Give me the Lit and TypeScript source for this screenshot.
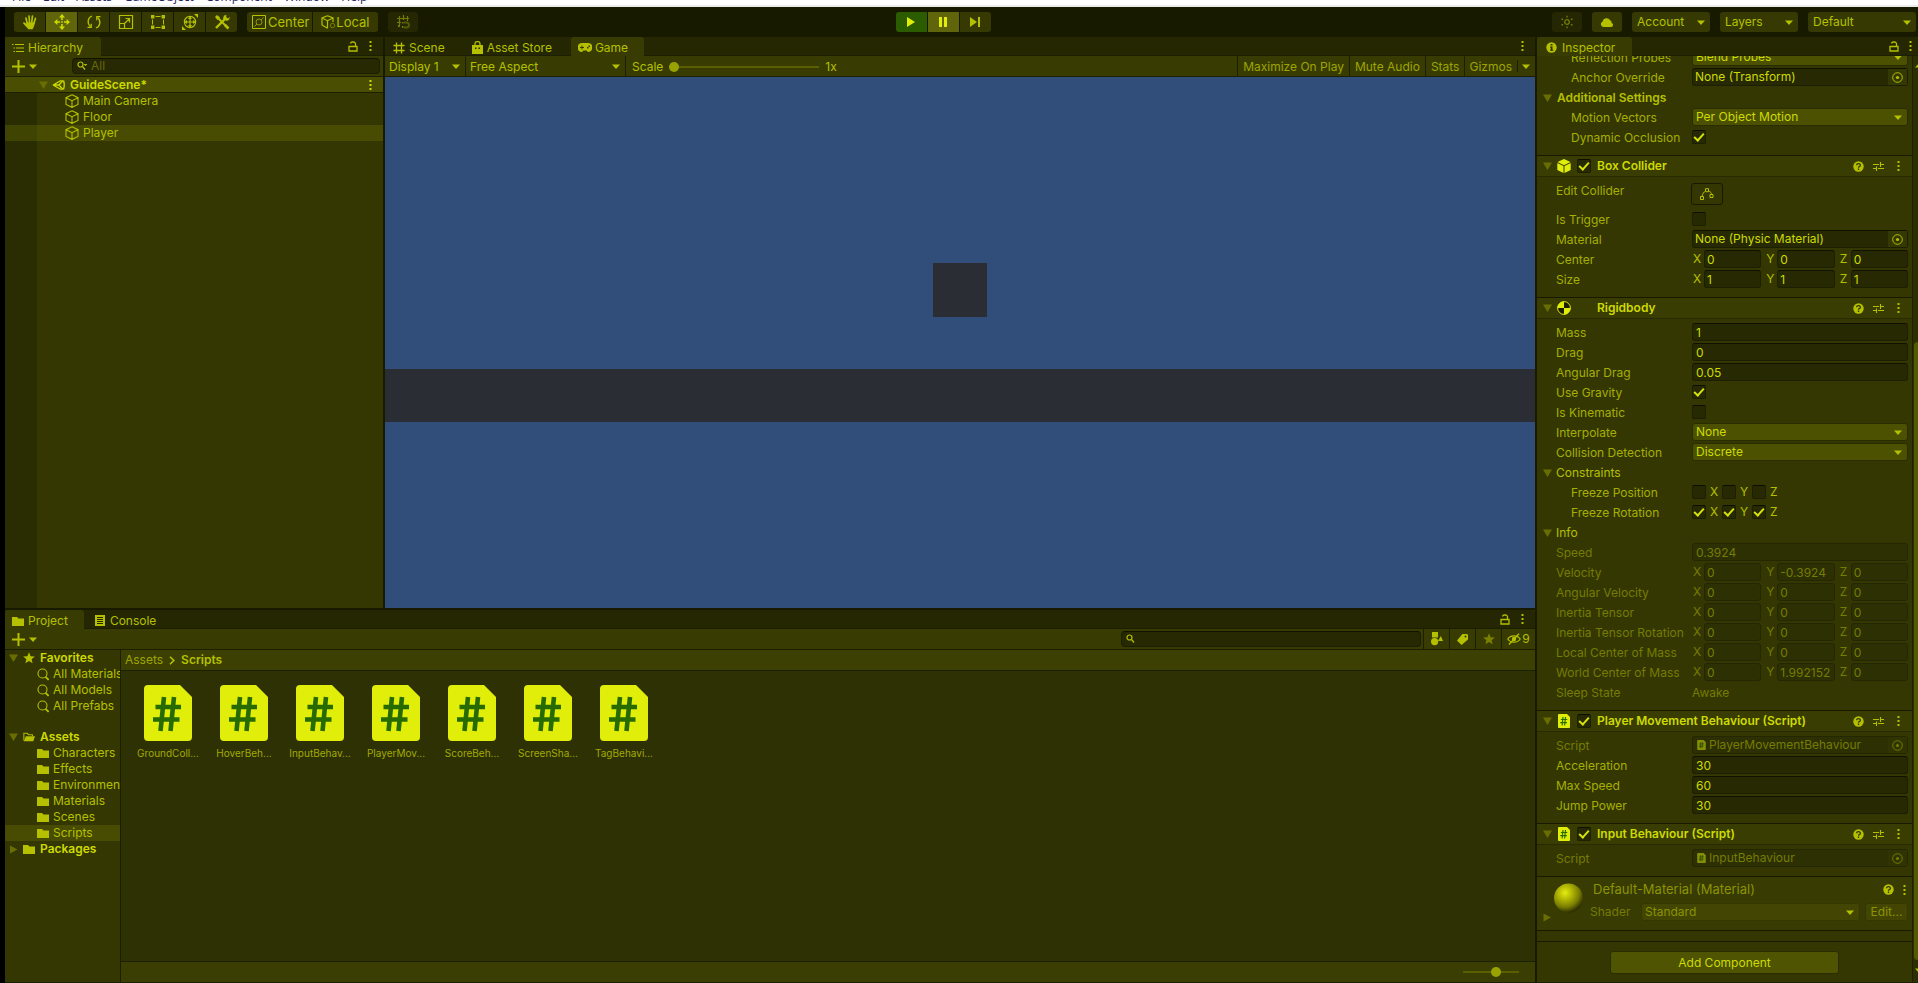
import { LitElement, html, svg, css, nothing, TemplateResult } from "lit";
import { customElement } from "lit/decorators.js";
import { classMap } from "lit/directives/class-map.js";

/* ---------- icons ---------- */

const icon = (w: number, h: number, body: unknown, cls = "") =>
  html`<svg class="ico ${cls}" width=${w} height=${h} viewBox="0 0 ${w} ${h}" fill="currentColor" aria-hidden="true">${body}</svg>`;

const line = (d: string, width = 1) =>
  svg`<path d=${d} fill="none" stroke="currentColor" stroke-width=${width}></path>`;

const icons = {
  hand: () => icon(16, 16, svg`
    <path d="M5.2 9.2 4 4.2M7.5 8 7 2M9.8 8 10.4 2.2M11.8 9.4 13.4 4.4" fill="none" stroke="currentColor" stroke-width="1.7" stroke-linecap="round"></path>
    <path d="M4.4 8.2h8.4c0 2.4-.9 4.8-2.2 7H6.400L1.200 9.400c-.5-.9.6-1.7 1.500-1l1.900 1.500z"></path>`),
  move: () => icon(16, 16, svg`
    <path d="M8 0 11 3.4H5zM8 16l3-3.400H5zM0 8l3.400-3v6zM16 8l-3.400-3v6z"></path>
    ${line("M8 3v3M8 10v3M3 8h3M10 8h3", 1.6)}
    <path d="M7 7h2v2H7z" opacity=".6"></path>`),
  rotate: () => icon(16, 16, svg`
    ${line("M6 2C1.600 3.600.8 9 4.400 12.600M10 14c4.400-1.600 5.200-7 1.600-10.600", 1.3)}
    ${line("M1.500 13.400h3.700V9.800M14.500 2.600h-3.700v3.600", 1.3)}`),
  scale: () => icon(16, 16, svg`
    ${line("M1.500 1.500h13v13h-13zM1.500 9.500h5v5M6.500 9.500 11.500 4.500M7.500 4.500h4v4", 1.2)}`),
  rect: () => icon(16, 16, svg`
    <path d="M1 1h3.400v3.400H1zM11.600 1H15v3.400h-3.400zM1 11.600h3.400V15H1zM11.600 11.600H15V15h-3.400z"></path>
    ${line("M5.500 2.500h5M5.500 13.500h5M2.500 5.500v5M13.500 5.500v5")}`),
  transform: () => icon(18, 16, svg`
    <circle cx="9" cy="8" r="5.600" fill="none" stroke="currentColor" stroke-width="1.200"></circle>
    ${line("M9 3v10M4 8h10", 1.2)}
    <path d="M9 2.500 11 5H7zM9 13.500l2-2.500H7zM3.500 8 6 6v4zM14.500 8 12 6v4z"></path>
    <path d="M13 0h4v4zM1 12v4h4z"></path>`),
  tools: () => icon(16, 16, svg`
    ${line("M3.500 3.500 14 14", 2)}${line("M12.500 3.500 2 14", 2.4)}
    <path d="M1 3 3 1l3 2.500L3.500 6zM10 1.600l2.600-.6-.6 2.600 2.200.8 1.300-1.600c.5 3-1.400 4.400-3.500 3.900L9 4.500zM10 12l2-2 3.400 3.400-1.800 2z"></path>`),
  center: () => icon(14, 14, svg`
    ${line("M.5.5h13v13H.5z")}
    <g opacity=".7">${line("M5 9l-2.500 2.500M9 5l2.500-2.500")}<circle cx="7" cy="7" r="3" fill="none" stroke="currentColor"></circle></g>`),
  local: () => icon(15, 14, svg`
    ${line("M6.500.7 12 3v4M6.500.7 1 3v7l5.500 3.200M1 3l5.500 2.700L12 3M6.500 5.700v7.500", 1.2)}
    <circle cx="11.500" cy="10.500" r="2.200" fill="none" stroke="currentColor" opacity=".5"></circle>`),
  snap: () => icon(16, 16, svg`
    ${line("M4.500 2v10M8.500 1v5M12.500 2v5M2 4.500h12M2 8.500h4", 1.2)}
    <g opacity=".6">${line("M9 8.500h2.500a2.500 2.500 0 0 1 0 5H9", 2)}</g><path d="M7 8h1.500v1.500H7zM7 12h1.500v2H7zM3 11h2v2H3z"></path>`),
  play: () => icon(12, 12, svg`<path d="M2 1 10 6 2 11z"></path>`),
  pause: () => icon(12, 12, svg`<path d="M2 1h3v10H2zM7 1h3v10H7z"></path>`),
  step: () => icon(12, 12, svg`<path d="M1 1 8 6 1 11zM9 1h2v10H9z"></path>`),
  collab: () => icon(14, 14, svg`
    <circle cx="7" cy="7" r="2.300" fill="none" stroke="currentColor" stroke-width="1.300"></circle>
    <path d="M6.300.8h1.400v1.800H6.300zM6.300 11.400h1.400v1.800H6.300zM1.500 3.500h1.600v1.500H1.500zM10.900 3.500h1.600v1.500h-1.600zM1.500 9h1.600v1.500H1.500zM10.900 9h1.600v1.500h-1.600z"></path>`),
  cloud: () => icon(14, 10, svg`<path d="M3 10a3 3 0 0 1-.4-5.600A4 4 0 0 1 9.900 3a3 3 0 0 1 1.800 3A2.100 2.100 0 0 1 11.500 10z"></path>`),
  down: (cls = "") => icon(8, 5, svg`<path d="M0 .5h8L4 5z"></path>`, cls),
  up: () => icon(8, 5, svg`<path d="M0 4.500h8L4 0z"></path>`),
  fold: () => icon(9, 8, svg`<path d="M0 .5h9L4.500 8z"></path>`, "fold"),
  foldRight: () => icon(8, 9, svg`<path d="M.5.5v8L8 4.500z"></path>`, "fold"),
  lock: () => icon(10, 11, svg`${line("M1 5.500h8v4.500H1zM7.500 5.500V3a2 2 0 0 0-2-2h-1a2 2 0 0 0-2 1.500", 1.3)}`),
  dots: () => icon(3, 12, svg`<path d="M.5 1h2v2h-2zM.5 5h2v2h-2zM.5 9h2v2h-2z"></path>`, "dots"),
  list: () => icon(12, 12, svg`${line("M3 2.500h9M4 6h8M4 9.500h8", 1.2)}<path d="M0 2h1.500v1H0zM1.500 5.500H3v1H1.500zM1.500 9H3v1H1.500z"></path>`),
  plus: () => icon(13, 13, svg`<path d="M5.500 0h2v5.500H13v2H7.500V13h-2V7.500H0v-2h5.500z"></path>`),
  lens: (drop = false) => icon(12, 10, svg`
    <circle cx="3.500" cy="3.500" r="2.500" fill="none" stroke="currentColor" stroke-width="1.200"></circle>${line("M5.400 5.400 8 8.500", 1.4)}
    ${drop ? svg`<path d="M6.500 3h4l-2 2z"></path>` : nothing}`),
  find: () => icon(12, 13, svg`<circle cx="5.500" cy="5.500" r="4.500" fill="none" stroke="currentColor" stroke-width="1.100"></circle>${line("M8.600 8.800 11.600 12", 1.8)}`),
  grid: () => icon(12, 12, svg`${line("M3.500.5v11M8.500.5v11M.5 3.500h11M.5 8.500h11", 1.3)}`),
  bag: () => icon(11, 13, svg`<path d="M0 4h11v9H0z"></path>${line("M3 4V2.500a2 2 0 0 1 2-1.800h1a2 2 0 0 1 2 1.800V4", 1.3)}<path d="M3 6.500h1.500V8H3zM6.500 6.500H8V8H6.500z" fill="#242702"></path>`),
  gamepad: () => icon(14, 9, svg`<path d="M4 0h6a4.500 4.500 0 0 1 0 9L8.500 7.500h-3L4 9a4.500 4.500 0 0 1 0-9z"></path><path d="M3.500 2.500h1V4H6v1H4.500v1.500h-1V5H2V4h1.500zM9 4h1.500v1.500H9zM10.500 2.500H12V4h-1.500z" fill="#393c02"></path>`),
  unity: () => icon(13, 12, svg`
    ${line("M1 6 9.500 1.200M1 6l8.500 4.800M1.500 6H7M7 6l4-4.500M7 6l4 4.500", 1.3)}
    ${line("M11.500 1.500c1 3 1 6 0 9", 1.3)}`),
  cube: () => icon(14, 14, svg`${line("M7 .8 13 3.700v6.800L7 13.300 1 10.500V3.700zM1 3.700l6 3 6-3M7 6.700v6.600", 1.1)}`),
  info: () => icon(11, 11, svg`<circle cx="5.500" cy="5.500" r="5.200"></circle><path d="M4.700 2h1.800v1.600H4.700zM4 4.500h2.500v3.300h.8v1H4v-1h.8V5.500H4z" fill="#2c2f02"></path>`),
  folder: () => icon(12, 10, svg`<path d="M0 1h5l1.500 1.500H12V10H0z"></path>`),
  folderOpen: () => icon(14, 10, svg`${line("M1 9V.7h4l1.300 1.600H11V4", 1.2)}<path d="M3.300 4H14l-2 6H1z"></path>`),
  page: () => icon(10, 11, svg`<path d="M0 0h10v11H0z"></path><path d="M2 2h6v1H2zM2 4h6v1H2zM2 6h6v1H2zM2 8h6v1H2z" fill="#242702"></path>`),
  star: () => icon(12, 12, svg`<path d="M6 .3 7.600 4.200l4.200.3-3.200 2.700 1 4.100L6 9.100l-3.600 2.200 1-4.100L.2 4.500l4.200-.3z"></path>`),
  shapes: () => icon(12, 14, svg`<path d="M1 0h6v5.500H1zM7 9 9.800 4 12 9z"></path><circle cx="3.600" cy="9.600" r="3.600"></circle>`),
  tag: () => icon(11, 11, svg`<path d="M5.500 0H10l1 1v4.500L4.500 11 0 6.500z"></path><circle cx="8.500" cy="2.500" r="1" fill="#343702"></circle>`),
  eye: () => icon(14, 12, svg`${line("M.8 6C3.500 1.800 10.500 1.800 13.200 6 10.500 10.200 3.500 10.200.8 6z", 1.2)}<circle cx="7" cy="6" r="2.200"></circle>${line("M12 .8 2 11.500", 1.3)}`),
  chevron: () => icon(6, 9, svg`${line("M1 .8 4.800 4.500 1 8.200", 1.6)}`),
  picker: () => icon(11, 11, svg`<circle cx="5.500" cy="5.500" r="4.800" fill="none" stroke="currentColor"></circle><circle cx="5.500" cy="5.500" r="1.600"></circle>`),
  help: () => icon(11, 11, svg`<circle cx="5.500" cy="5.500" r="5.200"></circle><path d="M3.600 4.300a1.900 1.600 0 1 1 2.600 1.400q-.7.300-.7 1M5.500 7.600v1.300" fill="none" stroke="#343702" stroke-width="1.300"></path>`),
  presets: () => icon(11, 11, svg`${line("M0 3.500h6M8 3.500h3M0 7.500h3M5 7.500h6M7.500 1v5M3.500 5.500v4.500", 1.1)}`),
  vertices: () => icon(14, 12, svg`${line("M.5 8.500h3v3h-3zM5.500.7h3v3h-3zM10 6.500h3v3h-3zM2 8.500C2.500 5.500 4 4 5.500 3M8.500 3C10.500 3.500 11.500 5 11.500 6.500")}`),
  boxCollider: () => icon(14, 14, svg`<path d="M7 0 13.500 3 7 6.200.5 3zM.3 4l6.200 3v7L.3 11zM13.700 4l-6.200 3v7l6.200-3z"></path>`),
  rigidbody: () => icon(14, 14, svg`<circle cx="7" cy="7" r="6.400" fill="#1d1d00" stroke="currentColor"></circle><path d="M7 7V.6A6.400 6.400 0 0 0 .6 7zM7 7v6.400A6.400 6.400 0 0 0 13.400 7z"></path>`),
  script: (w = 12, h = 14) => html`<svg class="ico script" width=${w} height=${h} viewBox="0 0 48 56" aria-hidden="true">
    <path d="M4 0h32l12 12v40a4 4 0 0 1-4 4H4a4 4 0 0 1-4-4V4a4 4 0 0 1 4-4z" fill="#e0ee0a"></path>
    <path d="M20 12 16.500 46M30 12 26.500 46M11.500 22H37M9 34.500H35.500" fill="none" stroke="#266a00" stroke-width="4.600"></path></svg>`,
};

/* ---------- shared styling ---------- */

const shared = css`
  :host {
    --bar: #242702;
    --panel: #343702;
    --tool: #393c02;
    --line: #1c1f00;
    --text: #b4c000;
    --hot: #cddb00;
    --label: #a5af02;
    --dim: #757c02;
    --field: #262902;
    color: var(--text);
    font: 12px/16px Inter, "Liberation Sans", sans-serif;
  }
  * { box-sizing: border-box; }
  button, input, select { font: inherit; color: inherit; margin: 0; padding: 0; border: 0; background: none; border-radius: 0; outline: none; }
  button { display: flex; align-items: center; justify-content: center; white-space: nowrap; }
  select { appearance: none; width: 100%; height: 100%; }
  .ico { display: block; flex: none; }
  .fold { color: #696e02; }
  .tabs { display: flex; height: 19px; background: var(--bar); border-bottom: 1px solid var(--line); border-radius: 3px 3px 0 0; }
  .tab { gap: 4px; height: 19px; padding: 2px 18px 0 7px; justify-content: flex-start; }
  .tab.on { background: var(--tool); border-radius: 3px 3px 0 0; }
  .tabs .end { margin-left: auto; display: flex; align-items: center; gap: 11px; padding-right: 11px; }
  .strip { display: flex; align-items: center; height: 21px; background: var(--tool); border-bottom: 1px solid var(--line); }
  .add { gap: 4px; padding: 0 7px; height: 20px; }
  .search { display: flex; align-items: center; gap: 2px; height: 16px; padding-left: 4px; background: var(--field); border: 1px solid var(--line); border-top-color: #111100; border-radius: 4px; }
  .search input { flex: 1; min-width: 0; height: 14px; }
  .search input::placeholder { color: #66680a; opacity: 1; }
  .pick { display: grid; align-items: center; }
  .pick > * { grid-area: 1 / 1; }
  .pick .ico { justify-self: end; pointer-events: none; }
  input[type="range"] { appearance: none; height: 12px; background: linear-gradient(#5a6002, #5a6002) center / 100% 2px no-repeat; }
  input[type="range"]::-webkit-slider-thumb { appearance: none; width: 10px; height: 10px; border-radius: 5px; background: #98a202; }
`;

/* ---------- hierarchy ---------- */

@customElement("hierarchy-panel")
export class HierarchyPanel extends LitElement {
  static styles = [shared, css`
    :host { display: flex; flex-direction: column; min-width: 0; background: var(--panel); }
    .search { flex: 1; margin: 0 3px 0 28px; }
    .scene { display: flex; align-items: center; height: 16px; padding: 0 11px 0 34px; background: #4a4e02; border-bottom: 1px solid var(--line); color: var(--hot); font-weight: 600; }
    .scene .ico:nth-child(2) { margin: 0 5px 0 4px; }
    .scene span { flex: 1; }
    .tree { flex: 1; margin: 0; padding: 0; list-style: none; background: linear-gradient(90deg, #2a2d02 32px, transparent 32px); }
    li { display: flex; align-items: center; gap: 4px; height: 16px; padding-left: 60px; }
    li.sel { background: linear-gradient(90deg, #404402 32px, #484c02 32px); }
  `];
  render() {
    return html`
      <div class="tabs">
        <button class="tab on">${icons.list()}Hierarchy</button>
        <div class="end">${icons.lock()}${icons.dots()}</div>
      </div>
      <div class="strip">
        <button class="add" aria-label="Create">${icons.plus()}${icons.down()}</button>
        <div class="search">${icons.lens(true)}<input placeholder="All" aria-label="Search hierarchy"></div>
      </div>
      <div class="scene">${icons.fold()}${icons.unity()}<span>GuideScene*</span>${icons.dots()}</div>
      <ul class="tree">
        ${["Main Camera", "Floor", "Player"].map(n => html`
          <li class=${classMap({ sel: n === "Player" })}>${icons.cube()}${n}</li>`)}
      </ul>`;
  }
}

/* ---------- game view ---------- */

@customElement("game-panel")
export class GamePanel extends LitElement {
  static styles = [shared, css`
    :host { display: flex; flex-direction: column; min-width: 0; background: var(--panel); }
    .tab { padding-right: 16px; gap: 3px; }
    .tab.wide { padding-right: 19px; padding-left: 8px; gap: 4px; }
    .sep { padding: 0 5px 0 4px; height: 20px; border-right: 1px solid var(--line); }
    .sep select { padding-top: 1px; }
    .display { width: 81px; }
    .aspect { width: 160px; }
    .scale { display: flex; align-items: center; gap: 6px; flex: 1; padding: 1px 0 0 6px; }
    .scale input { width: 150px; }
    .opt { height: 20px; padding: 1px 5px 0 5px; border-left: 1px solid var(--line); color: #9ca502; }
    .giz { padding-left: 4px; }
    .more { height: 12px; padding: 0 5px 0 4px; border-left: 1px solid var(--line); }
    .view { flex: 1; min-height: 0; width: 100%; display: block; background: #304e79; }
  `];
  render() {
    return html`
      <div class="tabs">
        <button class="tab wide">${icons.grid()}Scene</button>
        <button class="tab wide">${icons.bag()}Asset Store</button>
        <button class="tab on">${icons.gamepad()}Game</button>
        <div class="end">${icons.dots()}</div>
      </div>
      <div class="strip">
        <div class="pick sep display"><select aria-label="Display"><option>Display 1</option></select>${icons.down()}</div>
        <div class="pick sep aspect"><select aria-label="Aspect"><option>Free Aspect</option></select>${icons.down()}</div>
        <div class="scale"><label for="scale">Scale</label><input id="scale" type="range" min="1" max="5" value="1">1x</div>
        <button class="opt">Maximize On Play</button>
        <button class="opt">Mute Audio</button>
        <button class="opt">Stats</button>
        <button class="opt giz">Gizmos</button>
        <button class="more" aria-label="Gizmo options">${icons.down()}</button>
      </div>
      <svg class="view" viewBox="0 0 1150 531" preserveAspectRatio="none" role="img" aria-label="Game view">
        <rect x="548" y="186" width="54" height="54" fill="#2a2d34"></rect>
        <rect x="0" y="292" width="1150" height="53" fill="#2a2d34"></rect>
      </svg>`;
  }
}

/* ---------- project browser ---------- */

@customElement("project-panel")
export class ProjectPanel extends LitElement {
  static styles = [shared, css`
    :host { display: flex; flex-direction: column; min-width: 0; background: var(--panel); border-bottom: 1px solid var(--line); }
    .tab { padding-right: 16px; }
    .tabs .tab:nth-child(2) { padding-left: 11px; gap: 5px; }
    .strip .search { width: 300px; margin: 0 2px 0 auto; }
    .cell { width: 26px; height: 20px; border-left: 1px solid var(--line); }
    .cell.wide { width: 34px; gap: 1px; }
    .cell.off { color: #7a8002; }
    .body { flex: 1; display: flex; min-height: 0; }
    .tree { width: 116px; overflow: hidden; border-right: 1px solid var(--line); }
    ul { margin: 0 0 15px; padding: 0; list-style: none; }
    .tree ul:nth-child(2) { margin-bottom: 0; }
    li { display: flex; align-items: center; gap: 4px; height: 16px; padding-left: 32px; white-space: nowrap; }
    li.root { padding-left: 4px; gap: 5px; font-weight: 600; color: var(--hot); }
    li.root .ico:nth-child(2) { width: 12px; }
    li .ico { color: var(--text); }
    li .fold { width: 9px; color: #696e02; }
    li.sel { background: #484c02; }
    .files { flex: 1; display: flex; flex-direction: column; min-width: 0; background: #2e3104; }
    nav { display: flex; align-items: center; gap: 6px; height: 21px; padding-left: 4px; background: #3c4002; border-bottom: 1px solid var(--line); }
    nav a { color: #9ca502; text-decoration: none; }
    nav b { font-weight: 600; }
    .grid { flex: 1; display: flex; flex-wrap: wrap; align-content: flex-start; padding: 14px 9px; }
    figure { display: flex; flex-direction: column; align-items: center; width: 76px; margin: 0; }
    figcaption { margin-top: 4px; font-size: 10px; color: #a2ab02; }
    footer { display: flex; align-items: center; justify-content: flex-end; height: 21px; padding-right: 16px; background: #3a3e02; border-top: 1px solid var(--line); }
    footer input { width: 56px; }
  `];
  render() {
    const root = (mark: TemplateResult, pic: TemplateResult, name: string) => html`<li class="root">${mark}${pic}${name}</li>`;
    const files = ["GroundColl...", "HoverBeh...", "InputBehav...", "PlayerMov...", "ScoreBeh...", "ScreenSha...", "TagBehavi..."];
    return html`
      <div class="tabs">
        <button class="tab on">${icons.folder()}Project</button>
        <button class="tab">${icons.page()}Console</button>
        <div class="end">${icons.lock()}${icons.dots()}</div>
      </div>
      <div class="strip">
        <button class="add" aria-label="Create">${icons.plus()}${icons.down()}</button>
        <div class="search">${icons.lens()}<input aria-label="Search project"></div>
        <button class="cell" aria-label="Search by type">${icons.shapes()}</button>
        <button class="cell" aria-label="Search by label">${icons.tag()}</button>
        <button class="cell off" aria-label="Save search">${icons.star()}</button>
        <button class="cell wide" aria-label="Hidden packages">${icons.eye()}9</button>
      </div>
      <div class="body">
        <div class="tree">
          <ul>
            ${root(icons.fold(), icons.star(), "Favorites")}
            ${["All Materials", "All Models", "All Prefabs"].map(n => html`<li>${icons.find()}${n}</li>`)}
          </ul>
          <ul>
            ${root(icons.fold(), icons.folderOpen(), "Assets")}
            ${["Characters", "Effects", "Environment", "Materials", "Scenes", "Scripts"].map(n => html`
              <li class=${classMap({ sel: n === "Scripts" })}>${icons.folder()}${n}</li>`)}
            ${root(icons.foldRight(), icons.folder(), "Packages")}
          </ul>
        </div>
        <div class="files">
          <nav><a href="#">Assets</a>${icons.chevron()}<b>Scripts</b></nav>
          <div class="grid">
            ${files.map(n => html`<figure>${icons.script(48, 56)}<figcaption>${n}</figcaption></figure>`)}
          </div>
          <footer><input type="range" aria-label="Icon size" value="60"></footer>
        </div>
      </div>`;
  }
}

/* ---------- inspector ---------- */

@customElement("inspector-panel")
export class InspectorPanel extends LitElement {
  static styles = [shared, css`
    :host { display: flex; flex-direction: column; min-width: 0; background: var(--panel); border-bottom: 1px solid var(--line); }
    .tab { padding: 2px 17px 0 9px; gap: 5px; }
    .tabs .end { padding-right: 6px; gap: 10px; }
    .body { flex: 1; display: flex; min-height: 0; }
    .scroll { flex: 1; min-width: 0; overflow: hidden; }
    .bar { width: 6px; display: flex; flex-direction: column; background: #2c2f02; border-left: 1px solid var(--line); color: var(--text); padding: 7px 0 9px 2px; overflow: hidden; }
    .bar i { flex: 1; margin: 274px 0 8px -1px; background: #545a02; border-radius: 4px 0 0 4px; }
    section { display: flex; flex-direction: column; gap: 2px; padding: 0 4px 9px 19px; border-top: 1px solid #191900; }
    section.first { margin-top: -8px; border-top: 0; }
    header { display: flex; align-items: center; height: 21px; margin: 0 -4px 2px -19px; padding: 0 12px 0 6px; background: #3a3d02; border-bottom: 1px solid #282b02; color: var(--hot); font-weight: 600; }
    header .mark { width: 14px; margin: 0 6px 0 5px; display: flex; justify-content: center; color: #e0ee0a; }
    header .box { width: 14px; margin-right: 6px; }
    header b { flex: 1; font-weight: 600; white-space: nowrap; }
    .tail { display: flex; align-items: center; gap: 9px; color: var(--text); }
    header .tail .dots { margin-left: 4px; }
    .row { display: grid; grid-template-columns: 136px minmax(0, 1fr); align-items: center; height: 18px; }
    .row > label, .row > .name { padding-top: 2px; line-height: 16px; white-space: nowrap; color: var(--label); }
    .row.in > :first-child { padding-left: 15px; }
    .row.off, .row.off > label, .row.off > .name { color: var(--dim); }
    .group { display: flex; align-items: center; gap: 4px; height: 18px; margin-left: -13px; padding-top: 2px; }
    .group.strong { font-weight: 600; gap: 5px; }
    .field, .obj { width: 100%; height: 18px; padding: 0 3px; background: var(--field); border: 1px solid var(--line); border-top-color: #111100; border-radius: 3px; color: var(--hot); }
    .obj { justify-content: flex-start; padding: 0 0 0 2px; }
    .obj span { flex: 1; text-align: left; }
    .obj em { display: flex; align-items: center; align-self: stretch; padding: 0 4px; background: #343802; color: var(--text); }
    .off .field, .off .obj { background: #2d3002; border-color: #242702; color: var(--dim); }
    .off .obj em { background: #303302; color: var(--dim); }
    .obj .script { width: 9px; height: 10px; margin: 0 3px 0 2px; opacity: .5; }
    .pick { height: 18px; background: #4c5102; border: 1px solid #2a2d02; border-radius: 3px; color: var(--hot); }
    .pick select { padding-left: 3px; }
    .pick .ico { margin-right: 5px; color: var(--text); }
    .vec { display: grid; grid-template-columns: repeat(3, minmax(0, 1fr)); gap: 4px; }
    .vec label { display: flex; align-items: center; gap: 3px; }
    .vec label span { width: 9px; padding-left: 1px; }
    .vec .field { flex: 1; min-width: 0; padding: 0 2px; }
    .trio { display: flex; }
    .trio label { display: flex; align-items: center; gap: 4px; width: 30px; }
    input[type="checkbox"] { appearance: none; display: grid; place-items: center; width: 14px; height: 14px; background: var(--field); border: 1px solid var(--line); border-top-color: #0e0e00; border-radius: 2px; }
    input[type="checkbox"]:checked::after { content: ""; width: 8px; height: 4px; margin-top: -3px; border: solid #d6e40a; border-width: 0 0 2px 2px; transform: rotate(-48deg); }
    .row.tall { align-items: start; height: 27px; padding-top: 1px; }
    .row.tall > label { padding-top: 1px; }
    .edit { width: 32px; height: 22px; margin: 1px 0 0 -1px; border: 1px solid #191900; border-radius: 3px; }
    .mat { display: grid; grid-template: 15px 18px / 38px 47px minmax(0, 1fr) 43px; row-gap: 6px; height: 55px; padding: 5px 4px 8px 15px; align-items: center; background: #383b02; border: solid #191900; border-width: 1px 0; }
    .mat .ball { grid-area: 1 / 1 / 3 / 2; align-self: start; }
    .mat .fold { grid-area: 2 / 1; align-self: end; margin: 0 0 -1px -9px; }
    .mat h2 { grid-area: 1 / 2 / 2 / 4; margin: 0; padding-left: 3px; font: 13px/15px Inter, "Liberation Sans", sans-serif; color: #8b9302; white-space: nowrap; }
    .mat .tail { grid-area: 1 / 4; justify-content: flex-end; padding-right: 2px; }
    .mat label { grid-area: 2 / 2; color: var(--dim); }
    .mat .pick { grid-area: 2 / 3; margin: 0 5px 0 4px; }
    .mat .more { grid-area: 2 / 4; }
    .mat .pick, .mat .more { height: 18px; background: #424602; border: 1px solid #343702; border-radius: 3px; color: #8b9302; }
    .mat select { opacity: 1; color: inherit; }
    .gap { height: 11px; border-bottom: 1px solid #191900; }
    .append { width: 229px; height: 23px; margin: 9px auto 0; background: #4e5402; border: 1px solid #2a2d02; border-radius: 3px; color: var(--hot); }
  `];

  private slug(name: string) {
    return name.toLowerCase().replace(/[^a-z]+/g, "-");
  }
  private row(name: string, control: TemplateResult, cls = "") {
    return html`<div class="row ${cls}"><label for=${this.slug(name)}>${name}</label>${control}</div>`;
  }
  private text(name: string, value: string, off = false) {
    return this.row(name, html`<input class="field" id=${this.slug(name)} .value=${value} ?disabled=${off}>`, off ? "off" : "");
  }
  private tick(name: string, on: boolean, cls = "") {
    return this.row(name, html`<input type="checkbox" id=${this.slug(name)} .checked=${on}>`, cls);
  }
  private choice(name: string, value: string, cls = "") {
    return this.row(name, html`<div class="pick"><select id=${this.slug(name)}><option>${value}</option></select>${icons.down()}</div>`, cls);
  }
  private object(name: string, value: string, cls = "", off = false) {
    return this.row(name, html`<button class="obj" id=${this.slug(name)} ?disabled=${off}>${off ? icons.script() : nothing}<span>${value}</span><em>${icons.picker()}</em></button>`, cls + (off ? " off" : ""));
  }
  private vector(name: string, values: string[], off = false) {
    return html`<div class="row ${off ? "off" : ""}" role="group" aria-label=${name}><span class="name">${name}</span>
      <div class="vec">${values.map((v, i) => html`<label><span>${"XYZ"[i]}</span><input class="field" .value=${v} ?disabled=${off}></label>`)}</div></div>`;
  }
  private trio(name: string, on: boolean) {
    return html`<div class="row in" role="group" aria-label=${name}><span class="name">${name}</span>
      <div class="trio">${["X", "Y", "Z"].map(a => html`<label><input type="checkbox" .checked=${on}>${a}</label>`)}</div></div>`;
  }
  private head(pic: TemplateResult, title: string, toggle = true) {
    return html`<header>${icons.fold()}<span class="mark">${pic}</span>
      <span class="box">${toggle ? html`<input type="checkbox" aria-label="Enable ${title}" .checked=${true}>` : nothing}</span>
      <b>${title}</b><span class="tail">${icons.help()}${icons.presets()}${icons.dots()}</span></header>`;
  }
  render() {
    const zero = ["0", "0", "0"];
    return html`
      <div class="tabs">
        <button class="tab on">${icons.info()}Inspector</button>
        <div class="end">${icons.lock()}${icons.dots()}</div>
      </div>
      <div class="body">
        <div class="scroll">
          <section class="first">
            ${this.choice("Reflection Probes", "Blend Probes", "in")}
            ${this.object("Anchor Override", "None (Transform)", "in")}
            <div class="group strong">${icons.fold()}Additional Settings</div>
            ${this.choice("Motion Vectors", "Per Object Motion", "in")}
            ${this.tick("Dynamic Occlusion", true, "in")}
          </section>
          <section>
            ${this.head(icons.boxCollider(), "Box Collider")}
            <div class="row tall"><label for="edit-collider">Edit Collider</label><button class="edit" id="edit-collider">${icons.vertices()}</button></div>
            ${this.tick("Is Trigger", false)}
            ${this.object("Material", "None (Physic Material)")}
            ${this.vector("Center", zero)}
            ${this.vector("Size", ["1", "1", "1"])}
          </section>
          <section>
            ${this.head(icons.rigidbody(), "Rigidbody", false)}
            ${this.text("Mass", "1")}
            ${this.text("Drag", "0")}
            ${this.text("Angular Drag", "0.05")}
            ${this.tick("Use Gravity", true)}
            ${this.tick("Is Kinematic", false)}
            ${this.choice("Interpolate", "None")}
            ${this.choice("Collision Detection", "Discrete")}
            <div class="group">${icons.fold()}Constraints</div>
            ${this.trio("Freeze Position", false)}
            ${this.trio("Freeze Rotation", true)}
            <div class="group">${icons.fold()}Info</div>
            ${this.text("Speed", "0.3924", true)}
            ${this.vector("Velocity", ["0", "-0.3924", "0"], true)}
            ${this.vector("Angular Velocity", zero, true)}
            ${this.vector("Inertia Tensor", zero, true)}
            ${this.vector("Inertia Tensor Rotation", zero, true)}
            ${this.vector("Local Center of Mass", zero, true)}
            ${this.vector("World Center of Mass", ["0", "1.992152", "0"], true)}
            <div class="row off"><span class="name">Sleep State</span><span class="name">Awake</span></div>
          </section>
          <section>
            ${this.head(icons.script(), "Player Movement Behaviour (Script)")}
            ${this.object("Script", "PlayerMovementBehaviour", "", true)}
            ${this.text("Acceleration", "30")}
            ${this.text("Max Speed", "60")}
            ${this.text("Jump Power", "30")}
          </section>
          <section>
            ${this.head(icons.script(), "Input Behaviour (Script)")}
            <div class="row off"><label for="input-script">Script</label>
              <button class="obj" id="input-script" disabled>${icons.script()}<span>InputBehaviour</span><em>${icons.picker()}</em></button></div>
          </section>
          <div class="mat">
            <svg class="ball" width="32" height="32" viewBox="0 0 32 32" aria-hidden="true">
              <defs><radialGradient id="shade" cx="0.38" cy="0.32" r="0.7">
                <stop offset="0" stop-color="#e4ec10"></stop><stop offset="0.3" stop-color="#b8be04"></stop>
                <stop offset="0.7" stop-color="#7a7e02"></stop><stop offset="1" stop-color="#2c2c02"></stop>
              </radialGradient></defs>
              <circle cx="16.500" cy="16" r="14.500" fill="url(#shade)"></circle>
            </svg>
            ${icons.foldRight()}
            <h2>Default-Material (Material)</h2>
            <span class="tail">${icons.help()}${icons.dots()}</span>
            <label for="shader">Shader</label>
            <div class="pick"><select id="shader" disabled><option>Standard</option></select>${icons.down()}</div>
            <button class="more">Edit...</button>
          </div>
          <div class="gap"></div>
          <button class="append">Add Component</button>
        </div>
        <div class="bar">${icons.up()}<i></i>${icons.down()}</div>
      </div>`;
  }
}

/* ---------- editor window ---------- */

@customElement("app-root")
export class AppRoot extends LitElement {
  static styles = [shared, css`
    :host { display: flex; flex-direction: column; height: 100vh; overflow: hidden; background: #181a00; }
    .menu { display: flex; align-items: flex-end; gap: 12px; flex: none; height: 7px; padding: 0 12px; overflow: hidden; background: #fff; border-bottom: 2px solid #ececec; color: #22225a; font: 12px/16px "Open Sans", sans-serif; }
    .frame { flex: 1; display: flex; flex-direction: column; min-height: 0; border-left: 5px solid #000; }
    .top { display: grid; grid-template-columns: 1fr auto 1fr; align-items: center; height: 30px; padding: 0 2px 0 9px; }
    .set { display: flex; gap: 10px; }
    .set.r { justify-content: flex-end; }
    .run { display: flex; gap: 1px; margin-right: 44px; }
    .tools { display: flex; gap: 1px; }
    .top button, .top .pick { height: 20px; background: #363a02; }
    .top .tools button, .run button { width: 31px; }
    .tools > :first-child, .run > :first-child { border-radius: 3px 0 0 3px; }
    .tools > :last-child, .run > :last-child { border-radius: 0 3px 3px 0; }
    .top .tools .on { background: #60640a; color: var(--hot); }
    .top .run .go { background: #2c5c00; color: #e0ee0a; }
    .top .run .held { background: #60640a; color: #e0ee0a; }
    .top .pivot button { width: auto; gap: 2px; padding: 0 3px 0 5px; font-size: 13px; }
    .top .pivot button:last-child { gap: 0; padding: 0 8px 0 8px; }
    .top .solo { width: 30px; border-radius: 3px; }
    .top .mute { background: #242702; color: #757b02; }
    .top .pick { width: 78px; border-radius: 3px; }
    .top .pick.big { width: 108px; }
    .top .pick select { padding-left: 5px; }
    .top .pick .ico { margin-right: 5px; }
    .dock { flex: 1; display: grid; min-height: 0; grid-template-columns: 378px minmax(0, 1fr) 381px; grid-template-rows: minmax(0, 571fr) minmax(0, 373fr); gap: 2px; }
    project-panel { grid-column: 1 / 3; grid-row: 2; }
    inspector-panel { grid-column: 3; grid-row: 1 / 3; }
  `];
  render() {
    const pick = (name: string, big = false) => html`
      <div class="pick ${big ? "big" : ""}"><select aria-label=${name}><option>${name}</option></select>${icons.down()}</div>`;
    return html`
      <div class="menu">${["File", "Edit", "Assets", "GameObject", "Component", "Window", "Help"].map(m => html`<span>${m}</span>`)}</div>
      <div class="frame">
        <div class="top">
          <div class="set">
            <div class="tools">
              <button aria-label="Hand">${icons.hand()}</button>
              <button class="on" aria-label="Move">${icons.move()}</button>
              <button aria-label="Rotate">${icons.rotate()}</button>
              <button aria-label="Scale">${icons.scale()}</button>
              <button aria-label="Rect">${icons.rect()}</button>
              <button aria-label="Transform">${icons.transform()}</button>
              <button aria-label="Custom tools">${icons.tools()}</button>
            </div>
            <div class="tools pivot">
              <button>${icons.center()}Center</button>
              <button>${icons.local()}Local</button>
            </div>
            <button class="solo mute" aria-label="Grid snapping">${icons.snap()}</button>
          </div>
          <div class="run">
            <button class="go" aria-label="Play">${icons.play()}</button>
            <button class="held" aria-label="Pause">${icons.pause()}</button>
            <button aria-label="Step">${icons.step()}</button>
          </div>
          <div class="set r">
            <button class="solo mute" aria-label="Collaborate">${icons.collab()}</button>
            <button class="solo" aria-label="Cloud">${icons.cloud()}</button>
            ${pick("Account")}${pick("Layers")}${pick("Default", true)}
          </div>
        </div>
        <div class="dock">
          <hierarchy-panel></hierarchy-panel>
          <game-panel></game-panel>
          <project-panel></project-panel>
          <inspector-panel></inspector-panel>
        </div>
      </div>`;
  }
}
